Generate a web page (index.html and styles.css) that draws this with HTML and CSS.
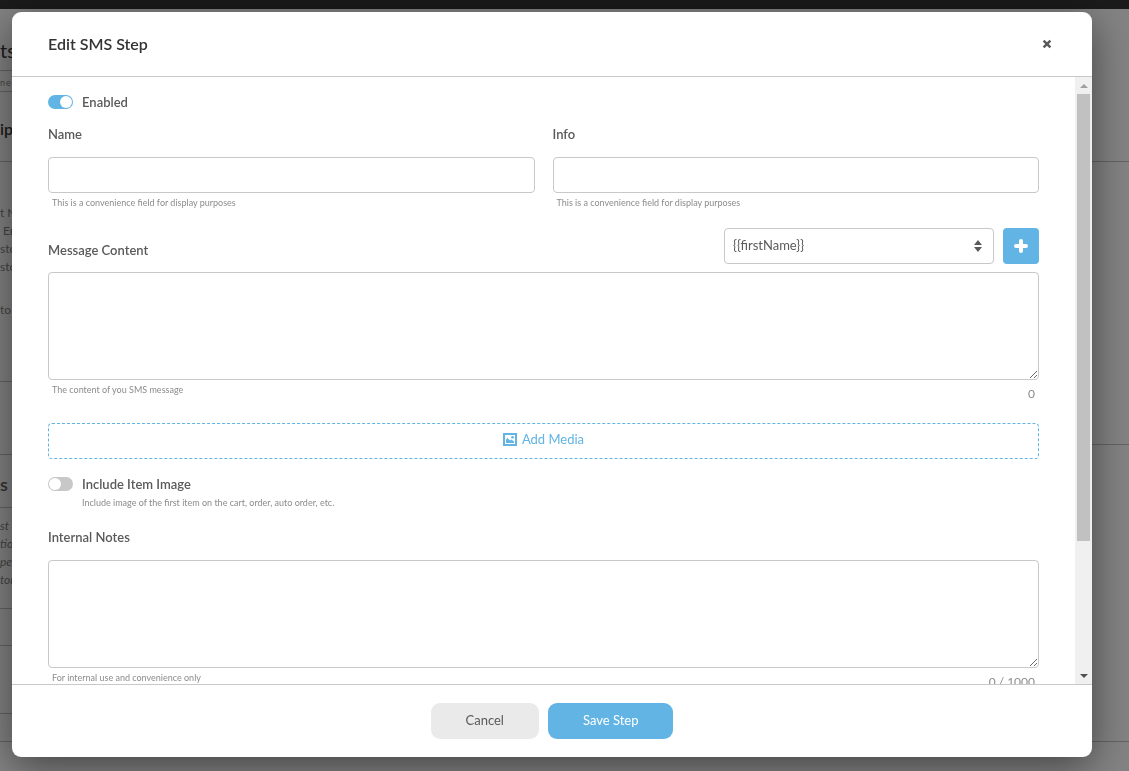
FILE: index.html
```html
<!DOCTYPE html>
<html lang="en">
<head>
    <meta charset="UTF-8">
    <meta name="viewport" content="width=device-width, initial-scale=1.0">
    <title>Edit SMS Step</title>
    <link rel="stylesheet" href="styles.css">
</head>
<body>
    <!-- Page behind the dialog -->
    <div class="page" aria-hidden="true">
        <div class="topbar"></div>
        <div class="columns">
            <div class="rail">
                <div class="row row-title">ts</div>
                <div class="row row-head">ne</div>
                <div class="row row-section">ip</div>
                <div class="row row-list">
                    <p>t N</p>
                    <p>&nbsp;En</p>
                    <p>stor</p>
                    <p>stor</p>
                    <p class="apart">to</p>
                </div>
                <div class="row row-gap"></div>
                <div class="row row-sub">s</div>
                <div class="row row-notes">
                    <p>st</p>
                    <p>tion</p>
                    <p>per</p>
                    <p>tom</p>
                </div>
                <div class="row row-small"></div>
                <div class="row row-medium"></div>
                <div class="row row-thin"></div>
            </div>
            <div class="side">
                <div class="row side-top"></div>
                <div class="row side-mid"></div>
                <div class="row side-low"></div>
            </div>
        </div>
    </div>

    <div class="overlay">
        <form class="modal" role="dialog" aria-labelledby="modal-title">
            <header class="modal-header">
                <h1 id="modal-title">Edit SMS Step</h1>
                <button type="button" class="close-btn" aria-label="Close">
                    <svg width="10" height="10" viewBox="0 0 10 10"><path d="M1.6 1.6l6.8 6.8M8.4 1.6l-6.8 6.8"/></svg>
                </button>
            </header>

            <div class="modal-main">
                <div class="modal-body">
                    <div class="switch-row">
                        <input type="checkbox" class="switch" id="enabled" checked>
                        <label for="enabled">Enabled</label>
                    </div>

                    <div class="fields">
                        <div class="field">
                            <label for="name">Name</label>
                            <input type="text" id="name">
                            <p class="help">This is a convenience field for display purposes</p>
                        </div>
                        <div class="field">
                            <label for="info">Info</label>
                            <input type="text" id="info">
                            <p class="help">This is a convenience field for display purposes</p>
                        </div>
                    </div>

                    <div class="message-row">
                        <label for="message">Message Content</label>
                        <div class="select-wrap">
                            <select aria-label="Variable">
                                <option>{{firstName}}</option>
                            </select>
                            <svg width="8" height="12" viewBox="0 0 8 12"><path d="M4 0l4 5H0zM4 12L0 7h8z"/></svg>
                        </div>
                        <button type="button" class="plus-btn" aria-label="Add variable">
                            <svg width="14" height="14" viewBox="0 0 14 14"><path d="M7 2v10M2 7h10"/></svg>
                        </button>
                    </div>
                    <textarea id="message"></textarea>
                    <div class="under">
                        <p class="help">The content of you SMS message</p>
                        <span class="count">0</span>
                    </div>

                    <button type="button" class="media-btn">
                        <svg width="14" height="13" viewBox="0 0 14 13">
                            <rect class="frame" x="1" y="1" width="12" height="11"/>
                            <path d="M3 10V6.500l1.500-1.500 2.500 2.500L8.500 6.500 11 8.500V10z"/>
                            <circle cx="9.500" cy="4.200" r="1.300"/>
                        </svg>
                        Add Media
                    </button>

                    <div class="switch-row">
                        <input type="checkbox" class="switch" id="item-image">
                        <label for="item-image">Include Item Image</label>
                    </div>
                    <p class="help help-switch">Include image of the first item on the cart, order, auto order, etc.</p>

                    <div class="field notes">
                        <label for="notes">Internal Notes</label>
                        <textarea id="notes"></textarea>
                        <div class="under">
                            <p class="help">For internal use and convenience only</p>
                            <span class="count">0 / 1000</span>
                        </div>
                    </div>
                </div>
                <div class="scrollbar" aria-hidden="true">
                    <span class="arrow arrow-up"></span>
                    <div class="track"><div class="thumb"></div></div>
                    <span class="arrow arrow-down"></span>
                </div>
            </div>

            <footer class="modal-footer">
                <button type="button" class="btn btn-cancel">Cancel</button>
                <button type="submit" class="btn btn-save">Save Step</button>
            </footer>
        </form>
    </div>
</body>
</html>
```
FILE: styles.css
```css
* {
    box-sizing: border-box;
}

body {
    margin: 0;
    height: 100vh;
    overflow: hidden;
    font-family: Lato, sans-serif;
    font-size: 13px;
    line-height: 20px;
    color: #5a5a5a;
    background-color: #848484;
}

p {
    margin: 0;
}

button,
input,
select,
textarea {
    font: inherit;
    color: inherit;
}

button {
    padding: 0;
    border: none;
    cursor: pointer;
}

svg {
    display: block;
}

/* page behind */
.topbar {
    height: 9px;
    background-color: #1b1b1b;
}

.columns {
    display: grid;
    grid-template-columns: 1fr 1fr;
}

.row {
    border-bottom: 1px solid #646464;
    color: #444;
    font-size: 12px;
    line-height: 18px;
}

.rail .row {
    overflow: hidden;
}

.row-title {
    height: 62px;
    padding-top: 32px;
    font-size: 20px;
    color: #1c1c1c;
}

.row-head {
    height: 21px;
    padding-top: 3px;
    font-size: 9px;
    letter-spacing: 1px;
}

.row-section {
    height: 70px;
    padding-top: 28px;
    font-size: 16px;
    font-weight: 600;
    color: #1c1c1c;
}

.row-list {
    height: 220px;
    padding-top: 42px;
}

.row-list .apart {
    margin-top: 25px;
}

.row-gap {
    height: 73px;
}

.row-sub {
    height: 53px;
    padding-top: 20px;
    font-size: 18px;
    font-weight: 600;
    color: #333;
}

.row-notes {
    height: 101px;
    padding-top: 9px;
    font-style: italic;
}

.row-small {
    height: 37px;
}

.row-medium {
    height: 68px;
}

.row-thin {
    height: 28px;
}

.side-top {
    height: 153px;
}

.side-mid {
    height: 283px;
}

.side-low {
    height: 297px;
}

/* dialog */
.overlay {
    position: fixed;
    inset: 0;
    display: flex;
    padding: 12px 37px 14px 12px;
}

.modal {
    flex: 1;
    display: flex;
    flex-direction: column;
    min-width: 0;
    border-radius: 9px;
    background-color: #fff;
    box-shadow: 0 9px 42px rgba(0, 0, 0, 0.5);
    overflow: hidden;
}

.modal-header {
    display: flex;
    justify-content: space-between;
    align-items: center;
    height: 65px;
    padding: 0 40px 0 36px;
    border-bottom: 1px solid #c8c8c8;
}

h1 {
    margin: 0;
    font-size: 16px;
    font-weight: 600;
    color: #333;
}

.close-btn {
    background: none;
}

.close-btn svg {
    stroke: #5a5a5a;
    stroke-width: 2.4;
}

.modal-main {
    flex: 1;
    display: flex;
    min-height: 0;
}

.modal-body {
    flex: 1;
    min-width: 0;
    padding: 15px 36px;
    overflow-y: auto;
    scrollbar-width: none;
}

label {
    font-weight: 600;
}

.switch-row {
    display: flex;
    align-items: center;
    gap: 9px;
}

.switch {
    appearance: none;
    display: flex;
    width: 25px;
    height: 14px;
    margin: 0;
    padding: 1px;
    border-radius: 7px;
    background-color: #c8c8c8;
    cursor: pointer;
}

.switch::before {
    content: "";
    width: 12px;
    height: 12px;
    border-radius: 50%;
    background-color: #fff;
}

.switch:checked {
    justify-content: flex-end;
    background-color: #61b4e4;
}

.fields {
    display: grid;
    grid-template-columns: 1fr 1fr;
    gap: 18px;
    margin-top: 12px;
}

.field label {
    display: block;
    margin-bottom: 13px;
}

input[type="text"],
select,
textarea {
    display: block;
    width: 100%;
    height: 36px;
    padding: 0 8px;
    border: 1px solid #c8c8c8;
    border-radius: 4px;
    background-color: #fff;
}

textarea {
    height: 108px;
    padding: 8px;
    resize: vertical;
}

.help {
    padding: 2px 4px 0;
    font-size: 9px;
    line-height: 16px;
    color: #8c8c8c;
}

.message-row {
    display: flex;
    align-items: center;
    gap: 9px;
    margin: 17px 0 8px;
}

.message-row label {
    flex: 1;
    padding-top: 8px;
}

.select-wrap {
    position: relative;
    width: 270px;
}

select {
    padding-bottom: 2px;
    appearance: none;
}

.select-wrap svg {
    position: absolute;
    top: 12px;
    right: 12px;
    fill: #5a5a5a;
    pointer-events: none;
}

.plus-btn {
    display: grid;
    place-items: center;
    width: 36px;
    height: 36px;
    border-radius: 4px;
    background-color: #61b4e4;
}

.plus-btn svg {
    stroke: #fff;
    stroke-width: 4;
    stroke-linecap: round;
}

.under {
    display: flex;
    justify-content: space-between;
}

.count {
    padding: 2px 4px 0;
    font-size: 12px;
    line-height: 24px;
    color: #8c8c8c;
}

.media-btn {
    display: flex;
    justify-content: center;
    align-items: center;
    gap: 5px;
    width: 100%;
    height: 36px;
    margin: 17px 0 15px;
    padding-bottom: 4px;
    border: 1px dashed #61b4e4;
    border-radius: 4px;
    background: none;
    color: #61b4e4;
}

.media-btn svg {
    fill: #61b4e4;
}

.media-btn .frame {
    fill: none;
    stroke: #61b4e4;
    stroke-width: 2;
}

.help-switch {
    padding: 1px 0 0 34px;
}

.notes {
    margin-top: 16px;
}

/* scrollbar */
.scrollbar {
    display: flex;
    flex-direction: column;
    width: 17px;
    background-color: #f0f0f0;
}

.arrow {
    display: grid;
    place-items: center;
    height: 17px;
}

.arrow::before {
    content: "";
    border: 4px solid transparent;
}

.arrow-up::before {
    border-top: none;
    border-bottom-color: #a0a0a0;
}

.arrow-down::before {
    border-bottom: none;
    border-top-color: #505050;
}

.track {
    flex: 1;
    padding: 0 2px;
}

.thumb {
    height: 78%;
    background-color: #c1c1c1;
}

/* footer */
.modal-footer {
    display: flex;
    justify-content: center;
    gap: 9px;
    padding: 18px;
    border-top: 1px solid #c8c8c8;
}

.btn {
    height: 36px;
    padding: 0 35px 2px;
    border-radius: 9px;
}

.btn-cancel {
    background-color: #eaeaea;
}

.btn-save {
    background-color: #61b4e4;
    color: #fff;
}
```
